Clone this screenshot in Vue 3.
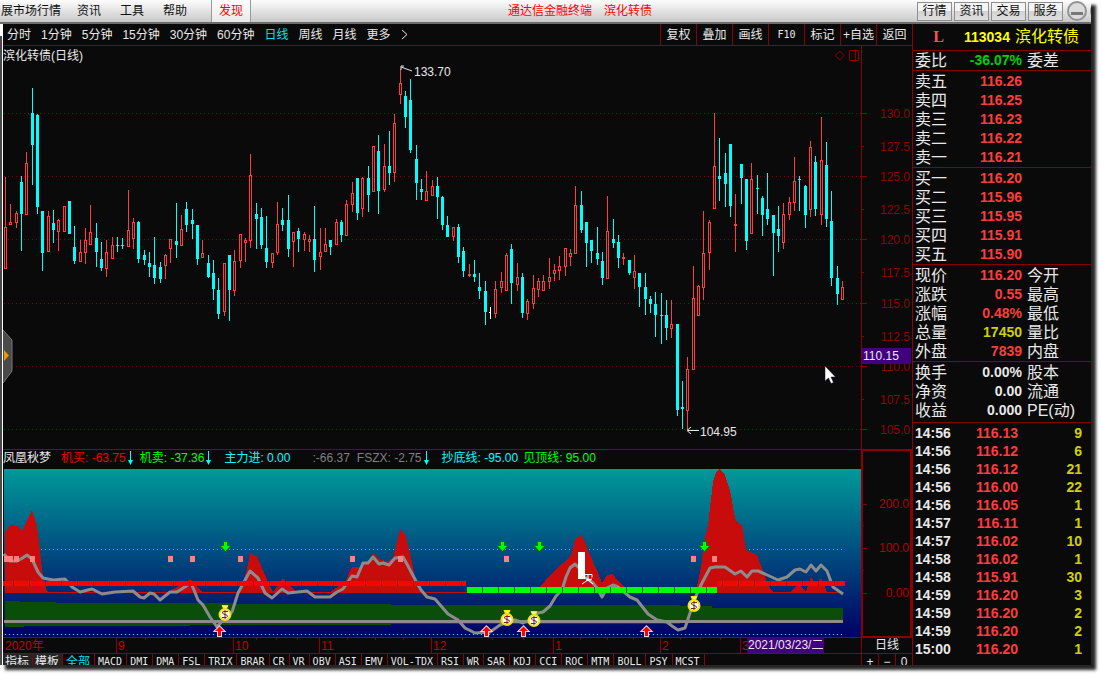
<script setup>
const menus = ['展市场行情', '资讯', '工具', '帮助']
const services = ['行情', '资讯', '交易', '服务']
const periods = ['分时', '1分钟', '5分钟', '15分钟', '30分钟', '60分钟', '日线', '周线', '月线', '更多']
const tools = ['复权', '叠加', '画线', 'F10', '标记', '+自选', '返回']
const tabs = ['指标', '模板', '全部', 'MACD', 'DMI', 'DMA', 'FSL', 'TRIX', 'BRAR', 'CR', 'VR', 'OBV', 'ASI', 'EMV', 'VOL-TDX', 'RSI', 'WR', 'SAR', 'KDJ', 'CCI', 'ROC', 'MTM', 'BOLL', 'PSY', 'MCST']

// kind high top bottom low
const raw = `r 177 227 269 269,r 204 222 225 225,r 211 213 223 228,c 176 182 214 251,r 152 163 215 215,c 88 113 145 185,c 114 115 207 214,c 211 211 253 271,r 211 216 252 252,c 210 223 230 243,r 219 220 232 251,r 206 206 232 232,c 201 201 234 234,c 226 247 261 264,r 240 252 262 262,r 228 240 253 264,r 205 232 245 245,c 223 238 252 267,c 242 259 268 271,r 240 252 269 277,r 237 245 259 259,c 237 245 246 252,c 238 245 246 249,r 190 230 247 247,r 218 222 239 249,c 221 222 259 263,c 250 255 260 265,c 252 263 267 277,c 237 265 278 284,c 262 267 279 283,r 254 255 266 279,r 239 239 249 263,c 203 241 245 258,r 215 229 246 246,c 202 209 225 232,c 209 220 224 239,c 225 225 259 265,r 240 253 258 258,c 255 263 277 278,c 260 273 289 300,c 278 290 314 319,r 263 263 312 316,c 255 255 290 321,r 250 261 291 296,r 234 234 261 268,r 238 240 243 262,r 154 175 241 248,c 203 214 219 249,c 208 217 245 249,c 216 248 262 268,r 253 253 263 268,r 202 224 253 255,c 208 220 225 231,c 195 220 249 257,r 232 232 242 267,c 228 231 239 252,r 232 234 240 251,r 235 239 242 252,c 206 239 260 272,r 228 252 257 270,r 228 244 252 252,c 240 240 247 255,r 219 222 245 245,c 220 222 235 242,r 200 204 236 236,r 182 193 205 212,c 178 178 213 220,r 177 178 209 217,c 166 178 195 212,r 146 146 192 192,c 135 151 191 214,r 144 166 190 192,c 131 166 173 185,r 114 123 173 182,r 69 83 95 104,c 91 96 117 128,c 79 100 150 153,c 145 159 183 200,c 179 189 192 200,r 171 191 201 201,r 180 186 196 196,c 177 186 197 219,c 196 197 225 230,c 216 225 237 237,r 227 227 237 241,c 224 227 257 263,c 247 251 271 277,r 264 274 276 277,c 260 274 277 282,c 273 287 291 299,c 281 291 312 325,w 307 312 313 319,r 281 289 314 318,r 272 281 288 293,r 253 255 291 291,c 244 249 283 304,r 263 277 285 291,c 273 277 313 318,r 299 301 314 320,r 275 288 304 309,r 278 281 290 297,r 275 281 291 291,r 258 277 282 289,r 264 270 274 281,r 256 266 271 280,r 248 248 267 276,r 249 253 257 266,r 186 205 254 254,c 191 205 230 233,c 222 222 243 267,c 240 240 251 263,c 227 253 259 265,c 252 261 278 285,r 196 231 279 279,c 219 239 243 248,c 235 242 258 268,r 253 257 259 265,c 260 260 273 275,r 255 271 278 289,c 273 273 287 307,c 273 287 299 315,c 296 299 304 313,c 292 304 315 337,c 293 315 316 344,c 300 315 328 340,r 300 324 329 338,c 324 324 410 416,c 381 407 409 429,r 357 369 411 430,r 266 298 370 370,r 285 286 316 316,r 211 253 288 300,r 220 222 253 270,r 113 166 209 209,c 138 176 179 201,c 153 173 184 207,c 144 144 206 217,r 194 224 226 252,c 164 164 178 204,c 179 179 241 250,r 163 179 234 234,c 175 188 189 214,c 196 198 215 236,c 173 209 219 225,c 215 215 233 276,c 206 229 236 252,r 203 214 243 249,r 197 202 215 220,r 157 181 203 211,c 176 179 180 211,c 185 186 215 228,r 141 147 210 217,c 156 162 209 216,r 117 160 215 225,c 142 165 219 227,c 191 221 278 286,c 266 278 294 305,r 281 287 300 300`
const candles = raw.split(',').map((s, i) => {
  const [kind, ...v] = s.split(' ')
  const [high, top, bottom, low] = v.map(Number)
  return { kind, high, top, bottom, low, x: Math.floor(5.5 + i * 5.3313) }
})
const byKind = k => candles.filter(c => c.kind === k)
const solidPath = k => byKind(k).map(c =>
  `M${c.x} ${c.high}h1V${c.low}h-1ZM${c.x - 1} ${c.top}h3V${c.bottom}h-3Z`).join('')
const wickPath = byKind('r').map(c => `M${c.x} ${c.high}h1V${c.top}h-1ZM${c.x} ${c.bottom}h1V${c.low}h-1Z`).join('')
const hollowPath = byKind('r').map(c => `M${c.x - 1} ${c.top}h3V${c.bottom}h-3Z` +
  (c.bottom - c.top > 2 ? `M${c.x} ${c.top + 1}V${c.bottom - 1}h1V${c.top + 1}Z` : '')).join('')

const gridLines = [113, 176, 239, 303, 366, 429]
const axisLabels = [[113, '130.0'], [146, '127.5'], [176, '125.0'], [209, '122.5'], [239, '120.0'], [272, '117.5'], [303, '115.0'], [336, '112.5'], [366, '110.0'], [399, '107.5'], [429, '105.0']]
const subLabels = [[504, '200.0'], [548, '100.0'], [593, '0.00']]

const redArea = 'M5 593V533L9 526L12 525L17 526L22 531L27 521L32 510L37 526L40 550L42 570L44 583L48 592L168 592L182 584L191 579L196 586L203 592L238 592L241 588L246 573L250 554L257 556L263 570L268 582L273 592L278 585L283 578L290 586L296 592L330 592L345 582L352 567L359 567L367 563L373 553L380 560L388 561L393 558L397 542L400 530L402 530L406 537L411 557L415 577L418 588L421 592L533 592L540 587L550 575L563 563L571 556L575 539L581 535L584 540L590 555L597 570L602 583L607 575L613 574L618 581L625 588L630 592L695 592L697 587L701 567L704 543L708 525L713 482L716 473L719 469L721 470L725 475L730 490L735 518L737 522L742 525L746 550L757 555L762 568L768 585L773 592L790 592L797 586L800 585L806 592L811 577L816 585L821 578L825 587L827 592H838V593Z'
const trend = '4,554 10,561 17,561 21,559 27,555 32,559 38,572 43,578 53,580 65,579 72,587 80,592 92,589 102,594 115,592 133,591 140,597 144,598 150,593 154,594 160,600 170,592 177,592 191,583 194,590 198,600 203,605 210,617 217,627 223,620 232,612 238,593 250,571 258,578 265,593 272,598 282,589 288,593 307,591 315,597 330,597 337,592 343,589 352,576 357,577 363,563 368,563 373,557 379,564 383,563 389,565 395,558 403,557 408,566 417,583 421,590 427,597 435,599 448,614 458,620 465,628 475,633 490,632 500,625 508,622 515,620 523,623 532,619 538,613 543,612 550,606 556,596 562,590 566,577 570,568 575,564 580,569 585,577 593,583 597,588 602,597 607,588 613,585 618,587 630,597 637,600 648,614 657,620 667,622 672,626 678,630 685,628 690,613 695,598 702,583 710,568 715,567 725,567 735,574 741,571 747,577 752,571 758,571 765,574 778,580 787,577 795,570 800,569 806,572 811,565 816,571 821,565 827,571 833,587 843,594'
const pinks = [[4, 9], [14, 5], [30, 5], [168, 5], [190, 5], [238, 5], [350, 5], [398, 5], [504, 5], [691, 5], [712, 5]]
const downs = [225, 502, 539, 704]
const ups = [219, 486, 523, 646]
const bags = [[225, 605], [507, 610], [534, 611], [694, 596]]
const months = [[116, '9'], [233, '10'], [319, '11'], [431, '12'], [553, '1'], [660, '2'], [740, '3']]
const minor = [145, 175, 205, 256, 276, 297, 347, 375, 403, 462, 492, 523, 580, 607, 633, 680, 700, 720]

const groups = [
  [['委比', '-36.07%', 'green', '委差']],
  [['卖五', '116.26', 'red'], ['卖四', '116.25', 'red'], ['卖三', '116.23', 'red'], ['卖二', '116.22', 'red'], ['卖一', '116.21', 'red']],
  [['买一', '116.20', 'red'], ['买二', '115.96', 'red'], ['买三', '115.95', 'red'], ['买四', '115.91', 'red'], ['买五', '115.90', 'red']],
  [['现价', '116.20', 'red', '今开'], ['涨跌', '0.55', 'red', '最高'], ['涨幅', '0.48%', 'red', '最低'], ['总量', '17450', 'yellow', '量比'], ['外盘', '7839', 'red', '内盘']],
  [['换手', '0.00%', 'white', '股本'], ['净资', '0.00', 'white', '流通'], ['收益', '0.000', 'white', 'PE(动)']],
]
const ticks = [['14:56', '116.13', 9], ['14:56', '116.12', 6], ['14:56', '116.12', 21], ['14:56', '116.00', 22], ['14:56', '116.05', 1], ['14:57', '116.11', 1], ['14:57', '116.02', 10], ['14:58', '116.02', 1], ['14:58', '115.91', 30], ['14:59', '116.20', 3], ['14:59', '116.20', 2], ['14:59', '116.20', 2], ['15:00', '116.20', 1]]
</script>

<template>
  <div class="window">
    <header class="menubar">
      <nav class="menus">
        <button v-for="m in menus" :key="m" class="menu">{{ m }}</button>
        <button class="menu found">发现</button>
      </nav>
      <div class="caption"><span>通达信金融终端</span><span>滨化转债</span></div>
      <div class="services">
        <button v-for="s in services" :key="s" class="service">{{ s }}</button>
        <button class="minimise" aria-label="最小化">
          <svg width="26" height="22" viewBox="0 0 26 22">
            <circle cx="12" cy="11" r="9" fill="#dcdcdc" stroke="#929292" stroke-width="2" />
            <rect x="6" y="12" width="12" height="3" fill="#777" />
            <circle cx="35" cy="11" r="9" fill="#dcdcdc" stroke="#929292" stroke-width="2" />
          </svg>
        </button>
      </div>
    </header>

    <div class="body">
      <div class="rail"></div>
      <main class="work">
        <div class="toolbar">
          <nav class="periods">
            <button v-for="p in periods" :key="p" :class="{ active: p === '日线' }">{{ p }}</button>
            <svg width="7" height="11" viewBox="0 0 7 11"><path d="M1 1L6 5.500L1 10" fill="none" stroke="#e8e8e8" /></svg>
          </nav>
          <div class="tools">
            <button v-for="t in tools" :key="t" :class="{ mono: t === 'F10' }">{{ t }}</button>
          </div>
        </div>

        <div class="panes">
          <section class="plots">
            <svg class="main-plot" viewBox="3 46 858 403" preserveAspectRatio="xMinYMin meet">
              <g stroke="#8c0000" stroke-dasharray="1 3">
                <path v-for="y in gridLines" :key="y" :d="`M4 ${y}.5H861`" />
              </g>
              <g shape-rendering="crispEdges">
                <path :d="solidPath('c')" fill="#00ffff" />
                <path :d="wickPath" fill="#ff3c3c" />
                <path :d="hollowPath" fill="#ff3c3c" fill-rule="evenodd" />
                <path d="M490 307h1v12h-1ZM489 312h1v1h-1Z" fill="#fff" />
              </g>
              <text x="3" y="60" fill="#e8e8e8">滨化转债(日线)</text>
              <path d="M401 70V66H404M401 67L412 71" fill="none" stroke="#e8e8e8" />
              <text x="414" y="76" fill="#e8e8e8">133.70</text>
              <path d="M699 430.500H688M691 427L687 430.500L691 434" fill="none" stroke="#e8e8e8" />
              <text x="700" y="436" fill="#e8e8e8">104.95</text>
              <path d="M840 51L844 55.500L840 60L835 55.500ZM849.500 50.500h9v10h-9ZM855.500 50.500v10" fill="none" stroke="#8c0000" />
              <path d="M3 330L12 340V371L3 383Z" fill="#4a4a4a" />
              <path d="M3 330L12 340V371L3 383" fill="none" stroke="#777" />
              <path d="M4 350L9 355.500L4 361Z" fill="#e89a00" />
              <path d="M825 366V381L828.500 378L831 383.500L833.500 382.500L831 377H835.500Z" fill="#fff" stroke="#14142c" stroke-width=".5" />
            </svg>

            <div class="indicator-line">
              <span class="white name">凤凰秋梦</span>
              <span class="value hot">机买: -63.75</span>
              <svg class="fall" viewBox="0 0 5 14"><path d="M2 0h1v9h2L2.500 14L0 9h2Z" /></svg>
              <span class="value lime">机卖: -37.36</span>
              <svg class="fall" viewBox="0 0 5 14"><path d="M2 0h1v9h2L2.500 14L0 9h2Z" /></svg>
              <span class="value aqua wide">主力进: 0.00</span>
              <span class="value dim far">:-66.37</span>
              <span class="value dim">FSZX: -2.75</span>
              <svg class="fall" viewBox="0 0 5 14"><path d="M2 0h1v9h2L2.500 14L0 9h2Z" /></svg>
              <span class="value aqua wide">抄底线: -95.00</span>
              <span class="value lime near">见顶线: 95.00</span>
            </div>

            <svg class="sub-plot" viewBox="3 469 858 168" preserveAspectRatio="xMinYMin meet">
              <path d="M3 469h1v168h-1Z" fill="#0a0a0a" />
              <path d="M5 601H20V602H56V603H235V604H391V605H680V606H712V608H843V621H680V624H391V625H190V626H24V627H5Z" fill="#0a4e0a" />
              <path d="M5 549.500H843" stroke="#32cc50" stroke-dasharray="1 3" />
              <path d="M5 634.500H843" stroke="#00ffff" stroke-dasharray="1 3" />
              <path :d="redArea" fill="#c80c0c" shape-rendering="crispEdges" />
              <path d="M4 621.500H843" stroke="#8c8c8c" stroke-width="3" />
              <polyline :points="trend" fill="none" stroke="#8c8c8c" stroke-width="3" stroke-linejoin="round" />
              <g fill="#ff8080"><rect v-for="p in pinks" :key="p[0]" :x="p[0]" y="556" :width="p[1]" height="6" /></g>
              <path d="M4 583.500H466M717 583.500H845" stroke="#980c1c" stroke-width="5" />
              <path d="M-2 583.500H466" stroke="#f00" stroke-width="5" stroke-dasharray="15 1" />
              <path d="M717 583.500h5M723 583.500H845" stroke="#f00" stroke-width="5" stroke-dasharray="15 1" />
              <path d="M467 590H717" stroke="#0a4e0a" stroke-width="6" />
              <path d="M467 590H717" stroke="#0f0" stroke-width="6" stroke-dasharray="15 1" />
              <g fill="#00ff00" stroke="#00780a" stroke-width="2" paint-order="stroke">
                <path v-for="x in downs" :key="x" :d="`M${x - 1} 542h3v4h3l-4.500 5l-4.500 -5h3Z`" />
              </g>
              <g fill="#ff0000" stroke="#f0d0d0" stroke-width="2" paint-order="stroke">
                <path v-for="x in ups" :key="x" :d="`M${x - 1} 636h3v-5h3l-4.500 -4.500l-4.500 4.500h3Z`" />
              </g>
              <g v-for="b in bags" :key="b[0]" :transform="`translate(${b[0]} ${b[1]})`">
                <path d="M-3 .5H3L1.500 3.500H-1.500Z" fill="#fff27a" stroke="#f5e400" />
                <circle cx="0" cy="9.500" r="5.500" fill="#fff" stroke="#f5e400" stroke-width="2" />
                <path d="M3 6.500H-1Q-3 6.500 -2.500 8Q-2 9 0 9.500Q3 10 2.500 11.500Q2 12.500 0 12.500H-3M0 5V14" fill="none" stroke="#7a2020" />
              </g>
              <path d="M578 552h7v27h-7Z" fill="#fff" />
              <path d="M584 574.500h8v3M586 580h5M588 575v5M588 580l-6 4M588 580l5 4M584 577l4 3M592 579l-4 1" fill="none" stroke="#fff" />
            </svg>

            <svg class="dates" viewBox="3 637 858 16" preserveAspectRatio="xMinYMin meet">
              <path d="M3 637.500H861" stroke="#8c0000" />
              <path v-for="m in minor" :key="m" :d="`M${m}.5 637v3`" stroke="#8c0000" />
              <text x="5" y="650" fill="#c00000">2020年</text>
              <g v-for="m in months" :key="m[0]">
                <path :d="`M${m[0]}.5 637v16`" stroke="#8c0000" />
                <text :x="m[0] + 2" y="650" fill="#c00000">{{ m[1] }}</text>
              </g>
              <rect x="747" y="637" width="77" height="16" fill="#400080" />
              <text x="748" y="649" fill="#e8e8e8">2021/03/23/二</text>
            </svg>

            <nav class="tabs">
              <button v-for="t in tabs" :key="t" :class="{ active: t === '全部' }">{{ t }}</button>
            </nav>
          </section>

          <aside class="axis">
            <svg class="axis-main" viewBox="861 46 51 403">
              <path d="M861.500 46V449" stroke="#8c0000" />
              <g v-for="(a, i) in axisLabels" :key="a[1]">
                <path :d="`M862 ${a[0]}.5h${i % 2 ? 2 : 5}`" stroke="#8c0000" />
                <text x="910" :y="a[0] + 5" text-anchor="end" fill="#960000">{{ a[1] }}</text>
              </g>
              <rect x="862" y="348" width="49" height="16" fill="#400080" />
              <text x="863" y="360" fill="#e8e8e8">110.15</text>
            </svg>
            <svg class="axis-sub" viewBox="861 449 51 189">
              <rect x="862" y="450" width="49" height="187" fill="none" stroke="#8c0000" stroke-width="2" />
              <g v-for="a in subLabels" :key="a[1]">
                <path :d="`M862 ${a[0]}.5h5`" stroke="#8c0000" />
                <text x="909" :y="a[0] + 4" text-anchor="end" fill="#b40000">{{ a[1] }}</text>
              </g>
              <path d="M862 525.500h2M862 570.500h2" stroke="#8c0000" />
            </svg>
            <div class="scale">日线</div>
            <div class="zoomers"><button>+</button><button>−</button><button>0</button></div>
          </aside>
        </div>
      </main>

      <aside class="quote">
        <div class="security"><b class="flag">L</b><b>113034</b><span>滨化转债</span></div>
        <table v-for="(g, i) in groups" :key="i" class="group">
          <tbody>
            <tr v-for="r in g" :key="r[0]">
              <th>{{ r[0] }}</th>
              <td :class="['num', r[2]]">{{ r[1] }}</td>
              <td class="other">{{ r[3] }}</td>
            </tr>
          </tbody>
        </table>
        <table class="ticks">
          <tbody>
            <tr v-for="(t, i) in ticks" :key="i">
              <td class="time">{{ t[0] }}</td>
              <td class="price">{{ t[1] }}</td>
              <td class="volume">{{ t[2] }}</td>
            </tr>
          </tbody>
        </table>
      </aside>
    </div>
  </div>
</template>

<style>
body { background: #fff; }
</style>

<style scoped>
.window {
  margin: 0 10px 9px 0;
  background: #0a0a0a;
  box-shadow: 5px 5px 3px #262626;
  font: 12px/16px "Liberation Sans", "Noto Sans CJK SC", sans-serif;
  color: #e8e8e8;
  white-space: nowrap;
}
button {
  margin: 0;
  padding: 0;
  border: 0;
  background: none;
  color: inherit;
  font: inherit;
}
svg { display: block; }
.menubar {
  display: flex;
  height: 22px;
  border-bottom: 2px solid #6c6c6c;
  background: linear-gradient(#fdfdfd, #c8c8c8);
  color: #101010;
  overflow: hidden;
}
.menus { display: flex; gap: 3px; }
.menu { padding: 0 8px; }
.menu:first-child { padding-left: 1px; padding-right: 5px; }
.found {
  margin-left: 13px;
  padding: 0 7px;
  border: solid #999;
  border-width: 0 1px;
  background: #fff9;
  color: #f00;
}
.caption {
  flex: 1;
  display: flex;
  justify-content: center;
  align-items: center;
  gap: 12px;
  padding-right: 8px;
  color: #f00;
}
.services { display: flex; align-items: center; gap: 2px; }
.service {
  width: 35px;
  height: 19px;
  border: 1px solid #8e8e8e;
  background: linear-gradient(#f4f4f4 50%, #d2d2d2 50%, #dedede);
}
.minimise { width: 26px; height: 22px; overflow: hidden; }
.body { display: flex; }
.rail {
  width: 2px;
  border-right: 1px solid #fff;
  background: linear-gradient(#fff 12px, #4a4a4a 12px);
}
.work { flex: 1; min-width: 0; }
.toolbar {
  display: flex;
  justify-content: space-between;
  height: 21px;
  border-bottom: 1px solid #8c0000;
}
.periods { display: flex; align-items: center; gap: 10px; padding-left: 4px; }
.active { color: #00e5e5; }
.tools { display: flex; }
.tools button { width: 36px; border-left: 1px solid #8c0000; }
.tools .mono { font: 10px/16px "DejaVu Sans Mono", monospace; }
.panes { display: flex; }
.plots { flex: 1; min-width: 0; }
.main-plot { width: 100%; height: 403px; }
.indicator-line {
  display: flex;
  align-items: center;
  height: 16px;
  padding-bottom: 3px;
  border-top: 1px solid #8c0000;
}
.value { margin-left: 7px; }
.name + .value { margin-left: 10px; }
.wide { margin-left: 13px; }
.far { margin-left: 22px; }
.near { margin-left: 5px; }
.fall { width: 5px; height: 14px; margin-left: 2px; fill: #00ffff; }
.hot { color: #f00000; }
.lime { color: #00ff00; }
.aqua { color: #00ffff; }
.dim { color: #808080; }
.sub-plot { width: 100%; height: 168px; background: linear-gradient(#009999, #000066); }
.dates { width: 100%; height: 16px; }
.tabs {
  display: flex;
  height: 11px;
  border-top: 1px solid #8c0000;
  overflow: hidden;
}
.tabs button {
  height: 16px;
  padding: 0 4px 0 3px;
  border-right: 1px solid #8c0000;
  font: 10px/16px "DejaVu Sans Mono", monospace;
}
.tabs button:nth-child(-n + 3) { font: 12px/15px "Liberation Sans", "Noto Sans CJK SC", sans-serif; }
.tabs button:nth-child(-n + 2) { padding: 0 3px 0 2px; background: #242424; }
.axis { width: 51px; }
.axis-main { width: 51px; height: 403px; }
.axis-sub { width: 51px; height: 189px; }
.scale {
  height: 15px;
  border-left: 1px solid #8c0000;
  line-height: 14px;
  text-align: center;
}
.zoomers { display: flex; height: 11px; border-top: 1px solid #8c0000; overflow: hidden; }
.zoomers button { flex: 1; height: 16px; border-left: 1px solid #8c0000; }
.quote { width: 178px; border-left: 1px solid #8c0000; }
.security {
  display: flex;
  align-items: center;
  height: 26px;
  border-bottom: 1px solid #8c0000;
  color: #ffff00;
  font-size: 16px;
}
.security b { width: 51px; font-size: 14px; }
.security .flag {
  width: 51px;
  color: #ff5050;
  text-align: center;
  font-family: "Liberation Serif", serif;
  font-size: 16px;
}
table { width: 100%; border-collapse: separate; border-spacing: 0; table-layout: fixed; }
td, th { padding: 0; text-align: left; }
.group { border-bottom: 1px solid #8c0000; font-size: 16px; line-height: 19px; }
.group + .group { padding-top: 1px; }
.group:nth-of-type(5) { padding-bottom: 2px; }
.group tr { height: 19px; }
.group th { width: 34px; padding-left: 2px; font-weight: 400; }
.group .num { width: 73px; text-align: right; font-size: 14px; font-weight: 700; }
.group .other { padding-left: 5px; }
.green { color: #00d000; }
.red { color: #ff3c3c; }
.yellow { color: #d0d000; }
.ticks { padding-top: 1px; font-size: 14px; font-weight: 700; line-height: 18px; }
.ticks tr { height: 18px; }
.ticks .time { width: 48px; padding-left: 2px; }
.ticks .price { width: 55px; color: #ff3c3c; text-align: right; }
.ticks .volume { padding-right: 9px; color: #d0d000; text-align: right; }
</style>
